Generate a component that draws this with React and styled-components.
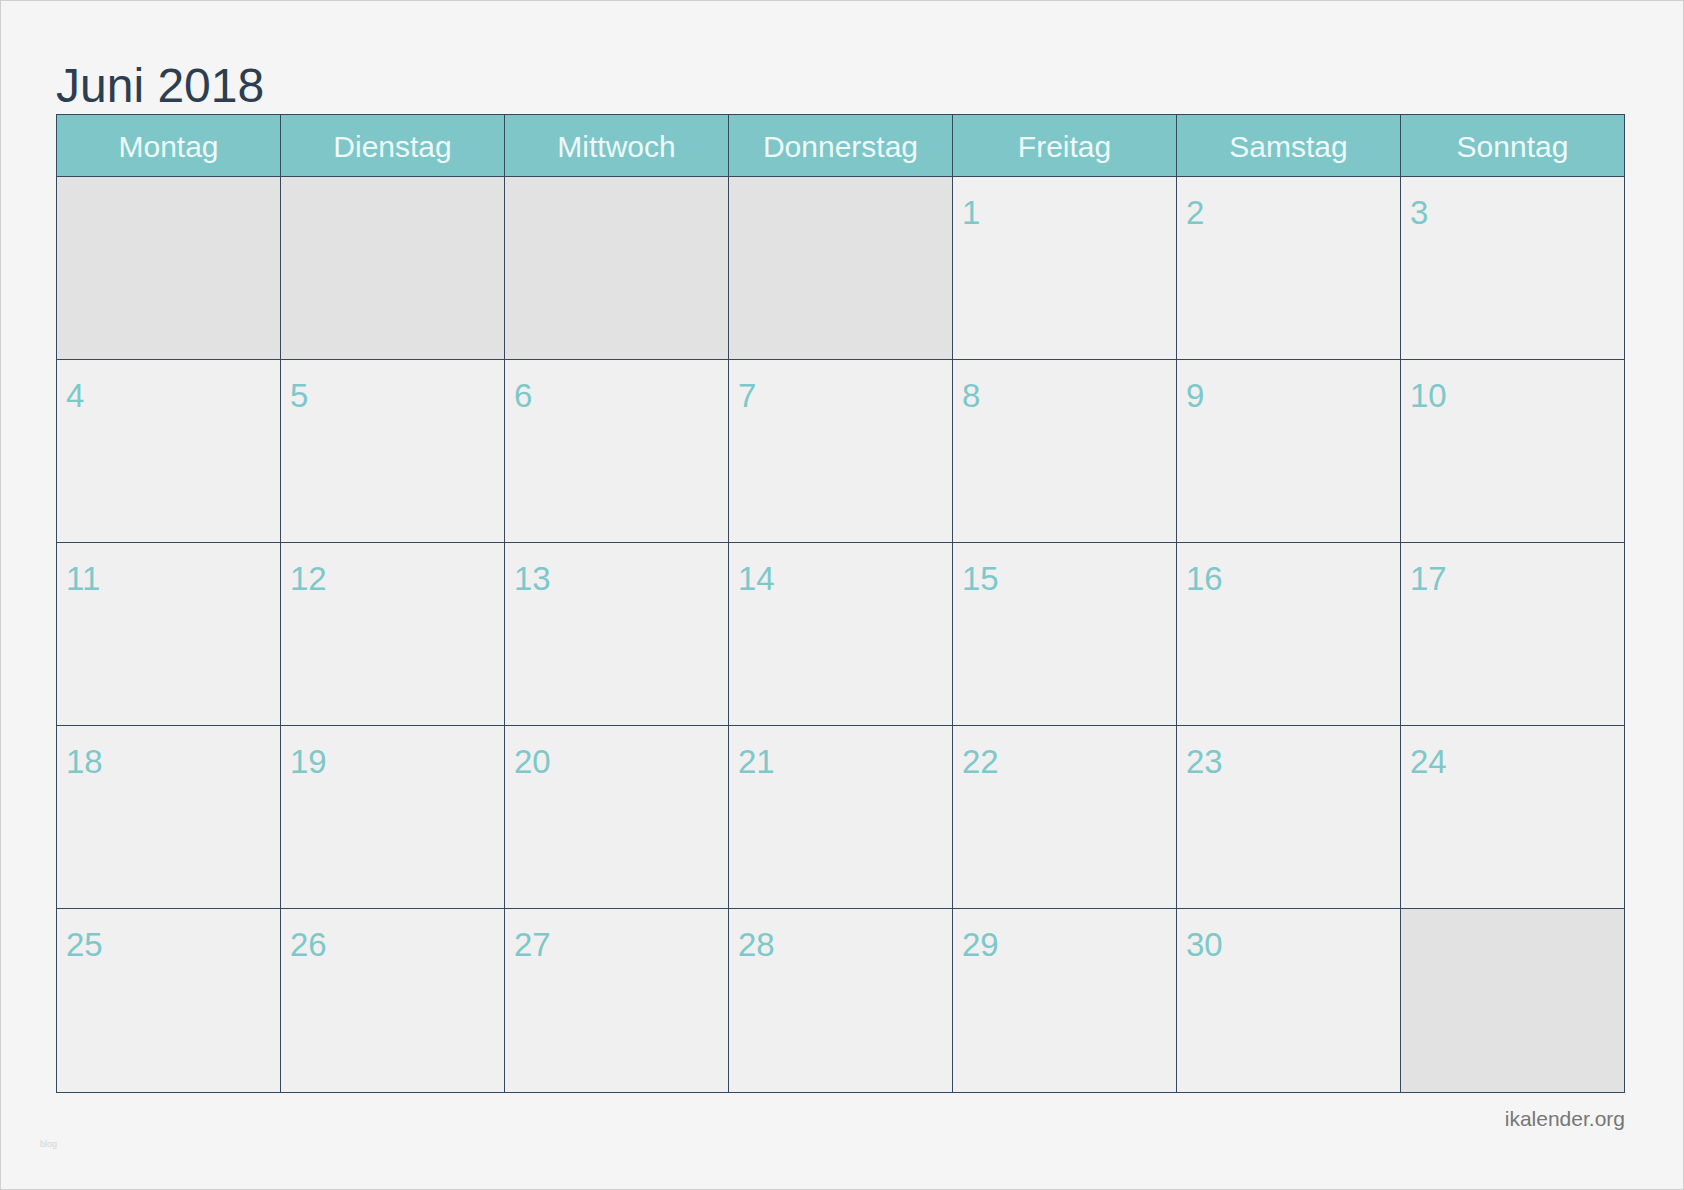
import React from 'react';
import styled, { createGlobalStyle } from 'styled-components';

const GlobalStyle = createGlobalStyle`
  html, body {
    margin: 0;
    padding: 0;
    background: #f5f5f5;
  }
  body {
    font-family: "Liberation Sans", Arial, sans-serif;
  }
`;

const Page = styled.div`
  box-sizing: border-box;
  width: 1684px;
  height: 1190px;
  border: 1px solid #cfcfcf;
  background: #f5f5f5;
  padding-top: 60px;
`;

const Title = styled.h1`
  margin: 0 0 4px 55px;
  font-size: 48px;
  line-height: 49px;
  font-weight: 400;
  color: #2c3e50;
`;

const Grid = styled.div`
  display: grid;
  grid-template-columns: repeat(7, 224px);
  grid-template-rows: 62px repeat(4, 183px) 184px;
  margin-left: 55px;
  width: max-content;
  border-top: 1px solid #34495e;
  border-left: 1px solid #34495e;
`;

const HeadCell = styled.div`
  background: #7ec6c8;
  color: #eefafa;
  font-size: 30px;
  line-height: 61px;
  padding-top: 1px;
  text-align: center;
  border-right: 1px solid #34495e;
  border-bottom: 1px solid #34495e;
`;

const DayCell = styled.div`
  background: ${p => (p.$empty ? '#e2e2e2' : '#f0f0f0')};
  border-right: 1px solid #34495e;
  border-bottom: 1px solid #34495e;
  padding: 19px 0 0 9px;
  color: #7ec8c9;
  font-size: 33px;
  line-height: 33px;
`;

const Footer = styled.div`
  display: flex;
  justify-content: space-between;
  align-items: flex-start;
  padding: 0 58px 0 39px;
  margin-top: 15px;
`;

const Blog = styled.span`
  margin-top: 32px;
  font-size: 9px;
  line-height: 9px;
  color: #d4d4d4;
`;

const Brand = styled.span`
  font-size: 21px;
  line-height: 21px;
  color: #777;
`;

const weekdays = ['Montag', 'Dienstag', 'Mittwoch', 'Donnerstag', 'Freitag', 'Samstag', 'Sonntag'];

// Juni 2018 beginnt an einem Freitag
const days = [
  ...Array(4).fill(null),
  ...Array.from({ length: 30 }, (_, i) => i + 1),
  null,
];

export default function App() {
  return (
    <>
      <GlobalStyle />
      <Page>
        <Title>Juni 2018</Title>
        <Grid>
          {weekdays.map(d => (
            <HeadCell key={d}>{d}</HeadCell>
          ))}
          {days.map((d, i) => (
            <DayCell key={i} $empty={d === null}>
              {d}
            </DayCell>
          ))}
        </Grid>
        <Footer>
          <Blog>blog</Blog>
          <Brand>ikalender.org</Brand>
        </Footer>
      </Page>
    </>
  );
}
